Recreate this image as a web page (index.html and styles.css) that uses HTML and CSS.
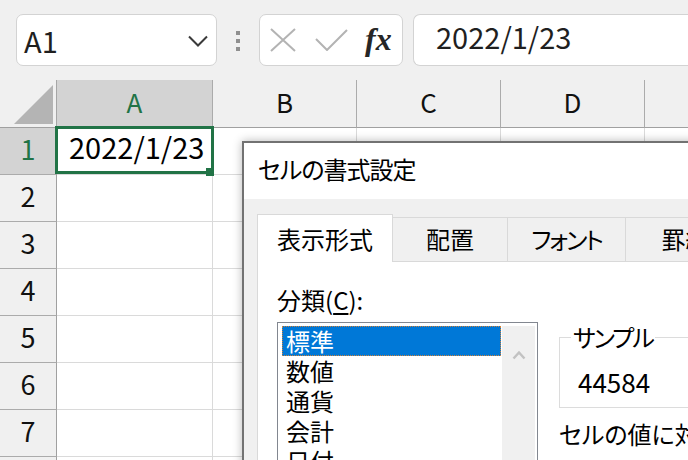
FILE: index.html
```html
<!DOCTYPE html>
<html lang="ja">
<head>
    <meta charset="UTF-8">
    <meta name="viewport" content="width=device-width, initial-scale=1.0">
    <title>セルの書式設定</title>
    <link rel="stylesheet" href="styles.css">
</head>
<body>
    <div class="app">
        <div class="toolbar">
            <div class="name-box">
                <span class="name-text">A1</span>
                <svg class="chevron" width="20" height="12" viewBox="0 0 20 12"><path d="M1 1.5 L10 10.5 L19 1.5"/></svg>
            </div>
            <div class="grip"><span></span><span></span><span></span></div>
            <div class="fx-box">
                <svg class="icon-cancel" width="26" height="24" viewBox="0 0 26 24"><path d="M1 1 L25 23 M25 1 L1 23"/></svg>
                <svg class="icon-enter" width="33" height="22" viewBox="0 0 33 22"><path d="M1 10 L12 21 L32 1"/></svg>
                <span class="fx">fx</span>
            </div>
            <div class="formula-input">2022/1/23</div>
        </div>

        <div class="sheet">
            <div class="corner"><span class="corner-tri"></span></div>
            <div class="col-head active">A</div>
            <div class="col-head">B</div>
            <div class="col-head">C</div>
            <div class="col-head">D</div>
            <div class="col-head"></div>

            <div class="row-head active">1</div>
            <div class="cell selected"><span class="value">2022/1/23</span><span class="sel-box"><span class="fill-handle"></span></span></div>
            <div class="cell"></div><div class="cell"></div><div class="cell"></div><div class="cell"></div>

            <div class="row-head">2</div>
            <div class="cell"></div><div class="cell"></div><div class="cell"></div><div class="cell"></div><div class="cell"></div>
            <div class="row-head">3</div>
            <div class="cell"></div><div class="cell"></div><div class="cell"></div><div class="cell"></div><div class="cell"></div>
            <div class="row-head">4</div>
            <div class="cell"></div><div class="cell"></div><div class="cell"></div><div class="cell"></div><div class="cell"></div>
            <div class="row-head">5</div>
            <div class="cell"></div><div class="cell"></div><div class="cell"></div><div class="cell"></div><div class="cell"></div>
            <div class="row-head">6</div>
            <div class="cell"></div><div class="cell"></div><div class="cell"></div><div class="cell"></div><div class="cell"></div>
            <div class="row-head">7</div>
            <div class="cell"></div><div class="cell"></div><div class="cell"></div><div class="cell"></div><div class="cell"></div>
            <div class="row-head">8</div>
            <div class="cell"></div><div class="cell"></div><div class="cell"></div><div class="cell"></div><div class="cell"></div>
        </div>

        <div class="dialog">
            <div class="dialog-title">セルの書式設定</div>
            <div class="dialog-body">
                <div class="tabs">
                    <div class="tab active">表示形式</div>
                    <div class="tab tab-align">配置</div>
                    <div class="tab tab-font">フォント</div>
                    <div class="tab tab-border">罫線</div>
                </div>
                <div class="panel">
                    <div class="panel-grid">
                        <div class="field-label">分類(<span class="key">C</span>):</div>
                        <div class="listbox">
                            <div class="list-items">
                                <div class="list-item selected">標準</div>
                                <div class="list-item">数値</div>
                                <div class="list-item">通貨</div>
                                <div class="list-item">会計</div>
                                <div class="list-item">日付</div>
                            </div>
                            <div class="scrollbar">
                                <svg class="scroll-up" width="14" height="10" viewBox="0 0 14 10"><path d="M1.5 8.5 L7 2.5 L12.5 8.5"/></svg>
                            </div>
                        </div>
                        <div class="side">
                            <fieldset class="sample">
                                <legend>サンプル</legend>
                                <div class="sample-value">44584</div>
                            </fieldset>
                            <div class="hint">セルの値に対応する書式</div>
                        </div>
                    </div>
                </div>
            </div>
        </div>
    </div>
</body>
</html>
```

FILE: styles.css
```css
* {
    box-sizing: border-box;
}
body {
    margin: 0;
    background-color: #fff;
    font-family: "Noto Sans CJK JP", "Noto Sans", sans-serif;
    color: #000;
}
.app {
    position: relative;
    width: 688px;
    height: 460px;
    overflow: hidden;
}

/* formula bar */
.toolbar {
    display: flex;
    align-items: flex-start;
    width: 780px;
    height: 80px;
    padding: 14px 0 0 16px;
    background-color: #f0f0f0;
}
.name-box {
    flex: 0 0 201px;
    height: 52px;
    display: flex;
    justify-content: space-between;
    align-items: flex-start;
    padding: 0 8px 0 7px;
    background-color: #fff;
    border: 1px solid #d3d3d3;
    border-radius: 7px;
}
.name-text {
    font-size: 29px;
    line-height: 50px;
    color: #1f1f1f;
}
.chevron {
    margin-top: 20px;
}
.chevron path {
    fill: none;
    stroke: #3a3a3a;
    stroke-width: 2;
}
.grip {
    flex: 0 0 4px;
    display: flex;
    flex-direction: column;
    gap: 4px;
    margin: 17px 19px 0;
}
.grip span {
    width: 4px;
    height: 4px;
    background-color: #8f8f8f;
}
.fx-box {
    flex: 0 0 144px;
    height: 52px;
    display: flex;
    align-items: center;
    padding-left: 10px;
    background-color: #fff;
    border: 1px solid #d3d3d3;
    border-radius: 7px;
}
.fx-box svg path {
    fill: none;
    stroke: #b3b3b3;
    stroke-width: 2;
}
.icon-enter {
    margin-left: 19px;
}
.fx {
    margin-left: 17px;
    margin-top: -2px;
    font-family: "Liberation Serif", serif;
    font-style: italic;
    font-weight: bold;
    font-size: 32px;
    line-height: 40px;
    color: #262626;
}
.formula-input {
    flex: 0 0 340px;
    height: 52px;
    margin-left: 10px;
    padding-left: 22px;
    background-color: #fff;
    border: 1px solid #d3d3d3;
    border-right: none;
    border-radius: 7px 0 0 7px;
    font-size: 29px;
    line-height: 43px;
    color: #1f1f1f;
}

/* sheet grid */
.sheet {
    display: grid;
    grid-template-columns: 57px 156px 144px 144px 144px 120px;
    grid-template-rows: 48px;
    grid-auto-rows: 47px;
}
.corner {
    display: flex;
    justify-content: flex-end;
    align-items: flex-end;
    padding: 0 3px 3px 0;
    background-color: #f0f0f0;
    border-right: 1px solid #a6a6a6;
    border-bottom: 1px solid #a0a0a0;
}
.corner-tri {
    width: 39px;
    height: 39px;
    background-color: #b4b4b4;
    clip-path: polygon(100% 0, 100% 100%, 0 100%);
}
.col-head {
    background-color: #f0f0f0;
    border-right: 1px solid #ababab;
    border-bottom: 1px solid #a0a0a0;
    text-align: center;
    font-size: 26px;
    line-height: 43px;
    color: #111;
}
.row-head {
    background-color: #f0f0f0;
    border-right: 1px solid #a0a0a0;
    border-bottom: 1px solid #ababab;
    text-align: center;
    font-size: 27px;
    line-height: 41px;
    color: #111;
}
.col-head.active,
.row-head.active {
    background-color: #d3d3d3;
    color: #217346;
}
.cell {
    border-right: 1px solid #dadada;
    border-bottom: 1px solid #dadada;
}
.cell.selected {
    position: relative;
    padding-left: 12px;
    font-size: 29px;
    line-height: 37px;
}
.sel-box {
    position: absolute;
    top: -2px;
    left: -2px;
    right: -2px;
    bottom: 0;
    border: 3px solid #217346;
}
.fill-handle {
    position: absolute;
    right: -3px;
    bottom: -5px;
    width: 8px;
    height: 8px;
    background-color: #217346;
}

/* format cells dialog */
.dialog {
    position: absolute;
    left: 242px;
    top: 141px;
    width: 480px;
    height: 340px;
    background-color: #f0f0f0;
    border: 2px solid #727272;
    box-shadow: 0 0 9px rgba(0, 0, 0, 0.28);
}
.dialog-title {
    height: 56px;
    padding-left: 14px;
    background-color: #fff;
    font-size: 24px;
    line-height: 52px;
    letter-spacing: -1px;
    font-feature-settings: "palt";
}
.dialog-body {
    padding: 15px 0 0 13px;
}
.tabs {
    display: flex;
    align-items: flex-end;
    height: 47px;
}
.tab {
    flex-shrink: 0;
    height: 44px;
    padding-top: 1px;
    border-top: 1px solid #d9d9d9;
    border-right: 1px solid #d9d9d9;
    text-align: center;
    font-size: 24px;
    line-height: 40px;
    white-space: nowrap;
    font-feature-settings: "palt";
}
.tab.active {
    position: relative;
    width: 136px;
    height: 48px;
    margin-bottom: -1px;
    padding-top: 4px;
    background-color: #fff;
    border-left: 1px solid #d9d9d9;
}
.tab-align {
    width: 115px;
}
.tab-font {
    width: 118px;
    letter-spacing: -2px;
}
.tab-border {
    width: 120px;
}
.panel {
    height: 260px;
    padding: 23px 0 0 19px;
    background-color: #fff;
    border: 1px solid #d9d9d9;
}
.panel-grid {
    display: grid;
    grid-template-columns: 261px 200px;
    column-gap: 21px;
}
.field-label {
    grid-column: 1 / 3;
    margin-bottom: 7px;
    font-size: 24px;
    line-height: 30px;
}
.key {
    text-decoration: underline;
    text-underline-offset: 3px;
}
.listbox {
    display: flex;
    gap: 1px;
    height: 150px;
    padding: 3px 2px 0 4px;
    border: 1px solid #828790;
    overflow: hidden;
}
.list-items {
    flex: 0 0 219px;
}
.list-item {
    height: 30px;
    padding-left: 3px;
    border: 1px solid transparent;
    font-size: 24px;
    line-height: 28px;
}
.list-item.selected {
    background-color: #0078d7;
    border: 1px dotted #d0823a;
    color: #fff;
}
.scrollbar {
    flex: 0 0 33px;
    padding: 15px 0 0 10px;
    background-color: #f0f0f0;
}
.scroll-up path {
    fill: none;
    stroke: #c2c2c2;
    stroke-width: 2.5;
}
.sample {
    margin: 0;
    padding: 15px 12px 10px 18px;
    border: 1px solid #dcdcdc;
    border-right: none;
}
.sample legend {
    margin-left: -7px;
    padding: 0 2px;
    font-size: 24px;
    line-height: 30px;
    letter-spacing: -2px;
    font-feature-settings: "palt";
}
.sample-value {
    font-size: 26px;
    line-height: 30px;
}
.hint {
    margin-top: 11px;
    font-size: 24px;
    line-height: 30px;
    white-space: nowrap;
    font-feature-settings: "palt";
}
```
